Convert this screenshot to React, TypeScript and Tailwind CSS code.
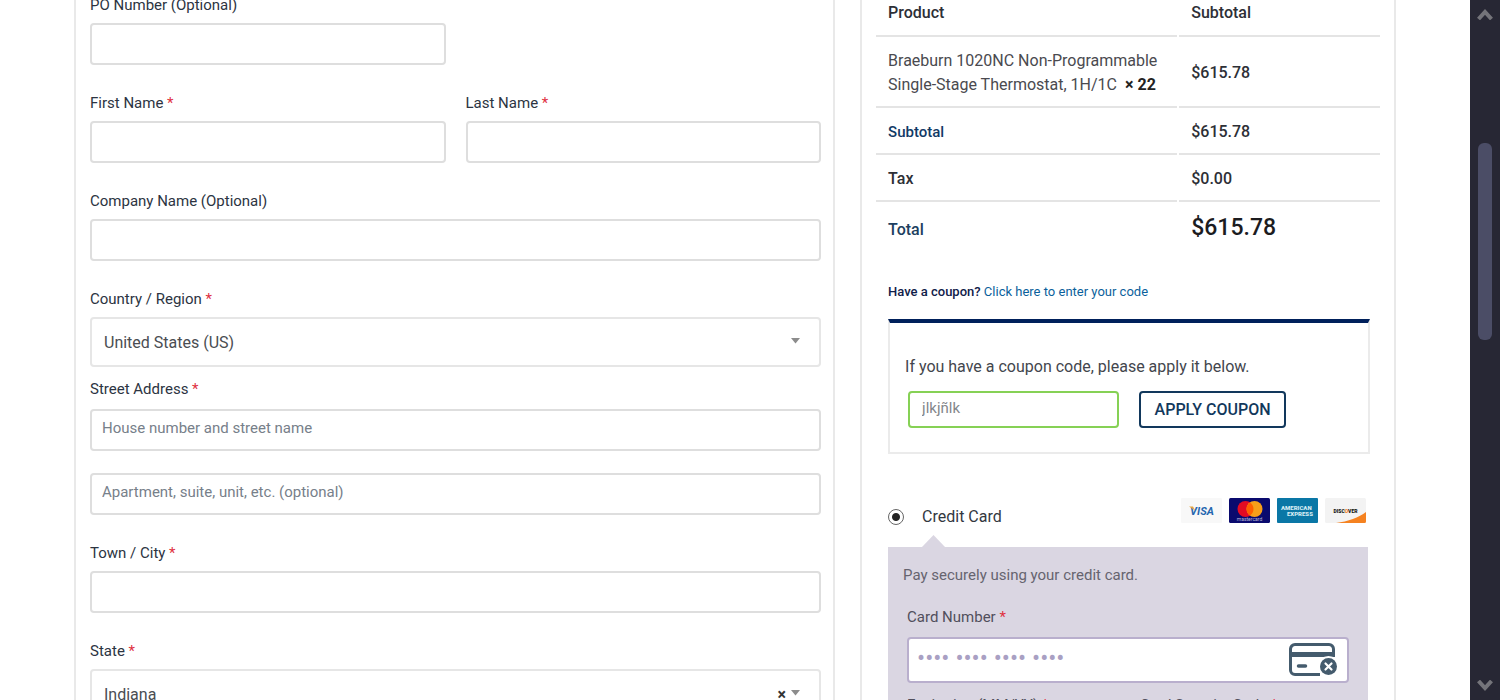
import { useState, type ReactNode } from 'react';

interface FieldProps {
  id: string;
  label: string;
  required?: boolean;
  children: ReactNode;
}

const inputClass =
  'block h-[42px] w-full rounded border-2 border-[#dedede] bg-white px-2.5 pb-1 text-[15px] text-[#333] placeholder-[#77808a] outline-none';

const selectClass =
  'block h-[50px] w-full appearance-none rounded-sm border-2 border-[#e6e6e6] bg-white px-3 pt-0.5 text-base text-[#4a4d52] outline-none';

function Required() {
  return <span className="text-[#e0313f]"> *</span>;
}

function Field({ id, label, required, children }: FieldProps) {
  return (
    <div>
      <label htmlFor={id} className="mb-2 block text-[15px] leading-5 text-[#2c3442]">
        {label}
        {required && <Required />}
      </label>
      {children}
    </div>
  );
}

function Caret() {
  return (
    <svg className="pointer-events-none absolute top-[21px] right-[21px] h-[6px] w-[9px]" viewBox="0 0 9 6">
      <path d="M0 0h9L4.5 5.5z" fill="#8c8c8c" />
    </svg>
  );
}

function BillingForm() {
  const [state, setState] = useState('IN');

  return (
    <section className="border-x-2 border-[#e9e9e9] pt-[7px] pr-3 pl-3.5">
      <div className="grid grid-cols-2 gap-x-5 gap-y-7">
        <Field id="po" label="PO Number (Optional)">
          <input id="po" type="text" className={inputClass} />
        </Field>
        <div />
        <Field id="first" label="First Name" required>
          <input id="first" type="text" className={inputClass} />
        </Field>
        <Field id="last" label="Last Name" required>
          <input id="last" type="text" className={inputClass} />
        </Field>
        <div className="col-span-2">
          <Field id="company" label="Company Name (Optional)">
            <input id="company" type="text" className={inputClass} />
          </Field>
        </div>
        <div className="col-span-2 flex flex-col gap-3">
          <Field id="country" label="Country / Region" required>
            <div className="relative">
              <select id="country" className={selectClass} defaultValue="US">
                <option value="US">United States (US)</option>
                <option value="CA">Canada</option>
              </select>
              <Caret />
            </div>
          </Field>
          <Field id="street" label="Street Address" required>
            <div className="flex flex-col gap-[22px] pt-0.5">
              <input id="street" type="text" placeholder="House number and street name" className={inputClass} />
              <input
                type="text"
                aria-label="Apartment"
                placeholder="Apartment, suite, unit, etc. (optional)"
                className={inputClass}
              />
            </div>
          </Field>
        </div>
        <div className="col-span-2">
          <Field id="city" label="Town / City" required>
            <input id="city" type="text" className={inputClass} />
          </Field>
        </div>
        <div className="col-span-2">
          <Field id="state" label="State" required>
            <div className="relative">
              <select
                id="state"
                className={selectClass}
                value={state}
                onChange={(e) => setState(e.target.value)}
              >
                <option value="" />
                <option value="IN">Indiana</option>
                <option value="IL">Illinois</option>
              </select>
              <button
                type="button"
                aria-label="Clear state"
                onClick={() => setState('')}
                className="absolute top-4 right-[35px] text-base leading-5 font-bold text-[#333]"
              >
                ×
              </button>
              <Caret />
            </div>
          </Field>
        </div>
      </div>
    </section>
  );
}

function OrderTable() {
  const cell = 'border-b-2 border-[#e4e4e4] px-3 pt-0.5 text-left';

  return (
    <table className="w-full border-separate border-spacing-x-0.5 border-spacing-y-0 text-base leading-6 text-[#2d2f36]">
      <thead>
        <tr className="h-[49px]">
          <th className={`${cell} w-3/5 font-medium`}>Product</th>
          <th className={`${cell} font-medium`}>Subtotal</th>
        </tr>
      </thead>
      <tbody>
        <tr className="h-[71px]">
          <td className={`${cell} text-[#4a4a4f]`}>
            Braeburn 1020NC Non-Programmable Single-Stage Thermostat, 1H/1C
            <strong className="ml-2 inline-block font-bold text-[#222]">× 22</strong>
          </td>
          <td className={`${cell} font-medium`}>$615.78</td>
        </tr>
        <tr className="h-[47px]">
          <th className={`${cell} text-[15px] font-medium text-[#123a66]`}>Subtotal</th>
          <td className={`${cell} font-medium`}>$615.78</td>
        </tr>
        <tr className="h-[47px]">
          <th className={`${cell} font-medium`}>Tax</th>
          <td className={`${cell} font-medium`}>$0.00</td>
        </tr>
        <tr className="h-[52px]">
          <th className="px-3 pt-1 text-left font-medium text-[#1d3f60]">Total</th>
          <td className="px-3 text-[23px] font-medium text-[#1c1c1f]">$615.78</td>
        </tr>
      </tbody>
    </table>
  );
}

function Coupon() {
  const [code, setCode] = useState('jlkjñlk');

  return (
    <div className="pt-7 pr-3 pl-3.5">
      <p className="text-[13px] leading-5 font-medium text-[#10204a]">
        Have a coupon?{' '}
        <a href="#coupon" className="font-normal text-[#0b5f9c]">
          Click here to enter your code
        </a>
      </p>
      <form
        id="coupon"
        className="mt-[17px] border-2 border-t-4 border-[#ebebeb] border-t-[#00205b] px-[15px] pt-8 pb-6"
        onSubmit={(e) => e.preventDefault()}
      >
        <p className="text-base leading-6 text-[#43464d]">If you have a coupon code, please apply it below.</p>
        <div className="mt-3 flex gap-5 px-[3px]">
          <input
            type="text"
            aria-label="Coupon code"
            value={code}
            onChange={(e) => setCode(e.target.value)}
            className="h-[37px] w-[211px] rounded border-2 border-[#86d155] bg-white px-3 pb-1 text-[15px] text-[#84868a] outline-none"
          />
          <button
            type="submit"
            className="h-[37px] w-[147px] rounded border-2 border-[#12385c] bg-white text-base font-medium text-[#12385c]"
          >
            APPLY COUPON
          </button>
        </div>
      </form>
    </div>
  );
}

function CardLogos() {
  return (
    <div className="flex gap-[7px] pr-0.5 pb-3">
      <svg className="h-[25px] w-[41px]" viewBox="0 0 41 25" role="img" aria-label="Visa">
        <rect width="41" height="25" rx="1" fill="#f8f8f8" />
        <text x="21" y="16.5" textAnchor="middle" fontSize="11" fontWeight="700" fontStyle="italic" fill="#2566af">
          VISA
        </text>
        <path d="M8 8.5h4l2 4z" fill="#e6a540" />
      </svg>
      <svg className="h-[25px] w-[41px]" viewBox="0 0 41 25" role="img" aria-label="Mastercard">
        <rect width="41" height="25" rx="1.5" fill="#0a0a6e" />
        <circle cx="16.5" cy="11" r="8" fill="#e30b23" />
        <circle cx="25.5" cy="11" r="8" fill="#f79f1a" />
        <path d="M21 4.4a8 8 0 0 1 0 13.2a8 8 0 0 1 0-13.2z" fill="#ff5f00" />
        <text x="20.5" y="22.5" textAnchor="middle" fontSize="5" fill="#b9b9da">
          mastercard
        </text>
      </svg>
      <svg className="h-[25px] w-[41px]" viewBox="0 0 41 25" role="img" aria-label="American Express">
        <rect width="41" height="25" rx="1" fill="#0a77a6" />
        <g fontSize="6" fontWeight="900" fill="#d5ebf3">
          <text x="4" y="11.5">
            AMERICAN
          </text>
          <text x="10" y="18">
            EXPRESS
          </text>
        </g>
      </svg>
      <svg className="h-[25px] w-[41px]" viewBox="0 0 41 25" role="img" aria-label="Discover">
        <rect width="41" height="25" rx="1.5" fill="#f3f3f3" />
        <path d="M11 25C23 23.5 34 19.5 41 14v9.5a1.5 1.5 0 0 1-1.5 1.5z" fill="#f58220" />
        <text x="20.5" y="15" textAnchor="middle" fontSize="5" fontWeight="900" fill="#111">
          DISC<tspan fill="#f58220">O</tspan>VER
        </text>
      </svg>
    </div>
  );
}

function InvalidCardIcon() {
  return (
    <svg
      className="pointer-events-none absolute top-1.5 right-[11px] h-[34px] w-[50px]"
      viewBox="0 0 50 34"
      fill="none"
      stroke="#445b6d"
      strokeWidth="3"
    >
      <path d="M32 31.500H7a4.500 4.500 0 0 1-4.500-4.500V6A4.500 4.500 0 0 1 7 1.500H41A4.500 4.500 0 0 1 45.500 6v8" />
      <path d="M3 11.500h42" strokeWidth="5" />
      <path d="M10.500 23h7" strokeWidth="3.5" strokeLinecap="round" />
      <circle cx="40.500" cy="23.500" r="10.500" fill="#fff" stroke="none" />
      <circle cx="40.500" cy="23.500" r="8.500" fill="#445b6d" stroke="none" />
      <path d="M37.500 20.500l6 6M43.500 20.500l-6 6" stroke="#fff" strokeWidth="2.200" strokeLinecap="round" />
    </svg>
  );
}

function Payment() {
  const fieldClass =
    'block h-[46px] w-full rounded border-2 border-[#b9afcd] bg-white px-2 text-base text-[#444] placeholder-[#a9a0c3] outline-none placeholder:text-2xl';

  return (
    <div className="px-3.5 pt-11">
      <div className="flex items-center justify-between">
        <label className="flex items-center gap-[18px] text-base leading-6 text-[#33383f]">
          <input
            type="radio"
            name="payment"
            defaultChecked
            className="h-4 w-4 appearance-none rounded-full border border-[#666] bg-white bg-radial from-[#222] from-0% via-[#222] via-35% to-white to-45%"
          />
          Credit Card
        </label>
        <CardLogos />
      </div>
      <svg className="ml-[34px] block h-3 w-[23px]" viewBox="0 0 23 12">
        <path d="M0 12L11.500 0L23 12z" fill="#dad6e2" />
      </svg>
      <div className="bg-[#dad6e2] px-[15px] pt-4 pb-6">
        <p className="text-[15px] leading-6 text-[#66646f]">Pay securely using your credit card.</p>
        <div className="px-1 pt-5">
          <label htmlFor="card" className="mb-2.5 block text-[15px] leading-5 text-[#514f5c]">
            Card Number
            <Required />
          </label>
          <div className="relative">
            <input id="card" type="text" placeholder="•••• •••• •••• ••••" className={fieldClass} />
            <InvalidCardIcon />
          </div>
          <div className="mt-3 grid grid-cols-2 gap-6">
            <div>
              <label htmlFor="exp" className="mb-2.5 block text-[15px] leading-5 text-[#514f5c]">
                Expiration (MM/YY)
                <Required />
              </label>
              <input id="exp" type="text" placeholder="MM / YY" className={fieldClass} />
            </div>
            <div>
              <label htmlFor="csc" className="mb-2.5 block text-[15px] leading-5 text-[#514f5c]">
                Card Security Code
                <Required />
              </label>
              <input id="csc" type="text" placeholder="CSC" className={fieldClass} />
            </div>
          </div>
        </div>
      </div>
    </div>
  );
}

function ScrollRail() {
  return (
    <div className="flex w-[30px] shrink-0 flex-col items-center bg-[#272734] py-2">
      <svg className="h-3 w-4" viewBox="0 0 16 12" fill="none" stroke="#74747a" strokeWidth="4">
        <path d="M1.500 11L8 4l6.500 7" />
      </svg>
      <div className="flex w-3.5 flex-1 flex-col">
        <div className="basis-[18.7%]" />
        <div className="basis-[29.8%] rounded-md bg-[#4b4d66]" />
      </div>
      <svg className="h-3 w-4" viewBox="0 0 16 12" fill="none" stroke="#74747a" strokeWidth="4">
        <path d="M1.500 1L8 8l6.500-7" />
      </svg>
    </div>
  );
}

export default function App() {
  return (
    <div className="flex h-screen overflow-hidden bg-white font-['Roboto',sans-serif]">
      <main className="min-w-0 flex-1 overflow-hidden">
        {/* page is scrolled part way down the checkout */}
        <div className="-mt-3 grid grid-cols-[1.42fr_1fr] gap-[25px] px-[74px]">
          <BillingForm />
          <section className="border-x-2 border-[#e9e9e9] px-3">
            <OrderTable />
            <Coupon />
            <Payment />
          </section>
        </div>
      </main>
      <ScrollRail />
    </div>
  );
}
